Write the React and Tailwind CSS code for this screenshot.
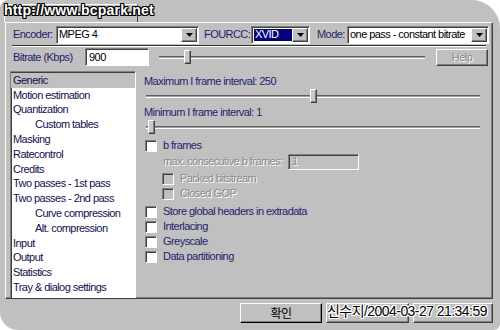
import React from "react";

const raised =
  "border border-t-white border-l-white border-r-[#404040] border-b-[#404040] shadow-[inset_-1px_-1px_0_#808080]";
const sunken =
  "border border-t-[#808080] border-l-[#808080] border-r-white border-b-white shadow-[inset_1px_1px_0_#404040]";
const label = "text-[#1e1e6e]";
const disabled = "text-[#8a8a8a] [text-shadow:1px_1px_0_#fff]";
const outlineWhite =
  "[text-shadow:1px_0_0_#fff,-1px_0_0_#fff,0_1px_0_#fff,0_-1px_0_#fff,1px_1px_0_#fff,-1px_-1px_0_#fff,1px_-1px_0_#fff,-1px_1px_0_#fff]";
const outlineBlack =
  "[text-shadow:1px_0_0_#000,-1px_0_0_#000,0_1px_0_#000,0_-1px_0_#000,1px_1px_0_#000,-1px_-1px_0_#000,1px_-1px_0_#000,-1px_1px_0_#000]";

function Arrow() {
  return (
    <div className={`w-[16px] h-[14px] bg-[#c0c0c0] flex items-center justify-center ${raised}`}>
      <svg width="7" height="4" viewBox="0 0 7 4">
        <path d="M0 0h7L3.5 4z" fill="#000" />
      </svg>
    </div>
  );
}

function Combo({ width, children }) {
  return (
    <div className={`h-[18px] bg-white flex items-center justify-between pl-[2px] pr-[1px] ${sunken}`} style={{ width }}>
      <div className="flex items-center h-full">{children}</div>
      <Arrow />
    </div>
  );
}

function Slider({ width, pos }) {
  return (
    <div className="relative h-[16px] flex items-center" style={{ width }}>
      <div className="w-full h-[3px] border-t border-t-[#606060] border-b border-b-white bg-[#a0a0a0]" />
      <div
        className={`absolute top-[1px] w-[7px] h-[14px] bg-[#c8c8c8] ${raised}`}
        style={{ left: pos }}
      />
    </div>
  );
}

function Check({ text, dim, indent }) {
  return (
    <div className={`flex items-center h-[15px] ${indent ? "ml-[17px]" : ""}`}>
      <div className={`w-[12px] h-[12px] ${dim ? "bg-[#c0c0c0]" : "bg-white"} ${sunken}`} />
      <span className={`ml-[6px] ${dim ? disabled : label}`}>{text}</span>
    </div>
  );
}

const items = [
  ["Generic", 0],
  ["Motion estimation", 0],
  ["Quantization", 0],
  ["Custom tables", 1],
  ["Masking", 0],
  ["Ratecontrol", 0],
  ["Credits", 0],
  ["Two passes - 1st pass", 0],
  ["Two passes - 2nd pass", 0],
  ["Curve compression", 1],
  ["Alt. compression", 1],
  ["Input", 0],
  ["Output", 0],
  ["Statistics", 0],
  ["Tray & dialog settings", 0],
];

export default function App() {
  return (
    <div className="w-[500px] h-[330px] bg-white overflow-hidden font-['Liberation_Sans',Arial,sans-serif] text-[11px] tracking-[-0.55px] leading-none">
      <div className="relative w-full h-full bg-[#c0c0c0] rounded-tl-[8px] rounded-tr-[28px] rounded-bl-[18px] rounded-br-[6px] flex flex-col">
        {/* tab header */}
        <div className="h-[22px] pt-[4px] pl-[4px]">
          <div className="w-[134px] h-[18px] border-t border-l border-t-white border-l-white border-r border-r-[#404040]" />
        </div>
        <div className={`absolute left-[4px] top-[3px] text-[14px] font-bold tracking-[0.2px] text-white ${outlineBlack}`}>
          http://www.bcpark.net
        </div>

        {/* tab body */}
        <div className={`ml-[5px] mr-[7px] h-[277px] flex flex-col ${raised}`}>
          <div className="h-[22px] flex items-center pl-[7px] pt-[1px]">
            <span className={`${label} w-[43px]`}>Encoder:</span>
            <Combo width={143}>
              <span className="text-black">MPEG 4</span>
            </Combo>
            <span className={`${label} ml-[5px] w-[47px]`}>FOURCC:</span>
            <Combo width={59}>
              <span className="bg-[#000080] text-white h-[12px] w-[38px] pl-[1px] flex items-center outline-1 outline-dotted outline-[#ffff80]">XVID</span>
            </Combo>
            <span className={`${label} ml-[7px] w-[30px]`}>Mode:</span>
            <Combo width={142}>
              <span className="text-black">one pass - constant bitrate</span>
            </Combo>
          </div>
          <div className="h-[2px] mx-[6px] border-t border-t-[#303030] border-b border-b-white" />
          <div className="h-[20px] flex items-center pl-[7px]">
            <span className={`${label} w-[72px]`}>Bitrate (Kbps)</span>
            <div className={`w-[64px] h-[18px] bg-white flex items-center pl-[3px] text-black ${sunken}`}>900</div>
            <div className="ml-[10px]">
              <Slider width={266} pos={25} />
            </div>
            <div className={`ml-[11px] w-[52px] h-[17px] flex items-center justify-center ${raised} ${disabled}`}>Help</div>
          </div>

          <div className="flex flex-1 mt-[4px]">
            <div className={`w-[126px] ml-[4px] bg-white pt-[1px] flex flex-col ${sunken} border-b-0`}>
              {items.map(([t, ind], i) => (
                <div
                  key={t}
                  className={`h-[14.8px] flex items-center text-[#10104e] ${ind ? "pl-[24px]" : "pl-[2px]"} ${i === 0 ? "bg-[#c0c0c0]" : ""}`}
                >
                  {t}
                </div>
              ))}
            </div>
            <div className="flex-1 pl-[8px] pt-[4px] flex flex-col">
              <div className={`${label} h-[12px] flex items-center`}>Maximum I frame interval: 250</div>
              <div className="ml-[2px] mt-[1px]">
                <Slider width={334} pos={164} />
              </div>
              <div className={`${label} h-[12px] mt-[2px] flex items-center`}>Minimum I frame interval: 1</div>
              <div className="ml-[2px] mt-[1px]">
                <Slider width={334} pos={2} />
              </div>
              <div className="mt-[3px] ml-[1px] flex flex-col">
                <Check text="b frames" />
                <div className="flex items-center h-[17px] ml-[18px]">
                  <span className={`${disabled} w-[125px]`}>max. consecutive b frames:</span>
                  <div className={`w-[71px] h-[16px] bg-[#c0c0c0] flex items-center pl-[3px] ${sunken} ${disabled}`}>1</div>
                </div>
                <div className="h-[1px]" />
                <Check text="Packed bitstream" dim indent />
                <Check text="Closed GOP" dim indent />
                <div className="h-[3px]" />
                <Check text="Store global headers in extradata" />
                <Check text="Interlacing" />
                <Check text="Greyscale" />
                <Check text="Data partitioning" />
              </div>
            </div>
          </div>
        </div>

        {/* bottom buttons */}
        <div className="relative flex justify-end items-start pt-[4px] pr-[7px] gap-[4px]">
          <div className={`w-[82px] h-[20px] flex items-center justify-center text-black text-[12px] font-['Noto_Sans_CJK_KR',sans-serif] ${raised} border-r-black border-b-black`}>
            확인
          </div>
          <div className={`w-[83px] h-[20px] ${raised}`} />
          <div className={`w-[80px] h-[20px] ${raised}`} />
          <div className={`absolute left-[327px] top-[5px] text-[14px] tracking-[-0.55px] text-black font-['Liberation_Sans','Noto_Sans_CJK_KR',sans-serif] whitespace-nowrap ${outlineWhite}`}>
            신수지/2004-03-27 21:34:59
          </div>
        </div>
      </div>
    </div>
  );
}
